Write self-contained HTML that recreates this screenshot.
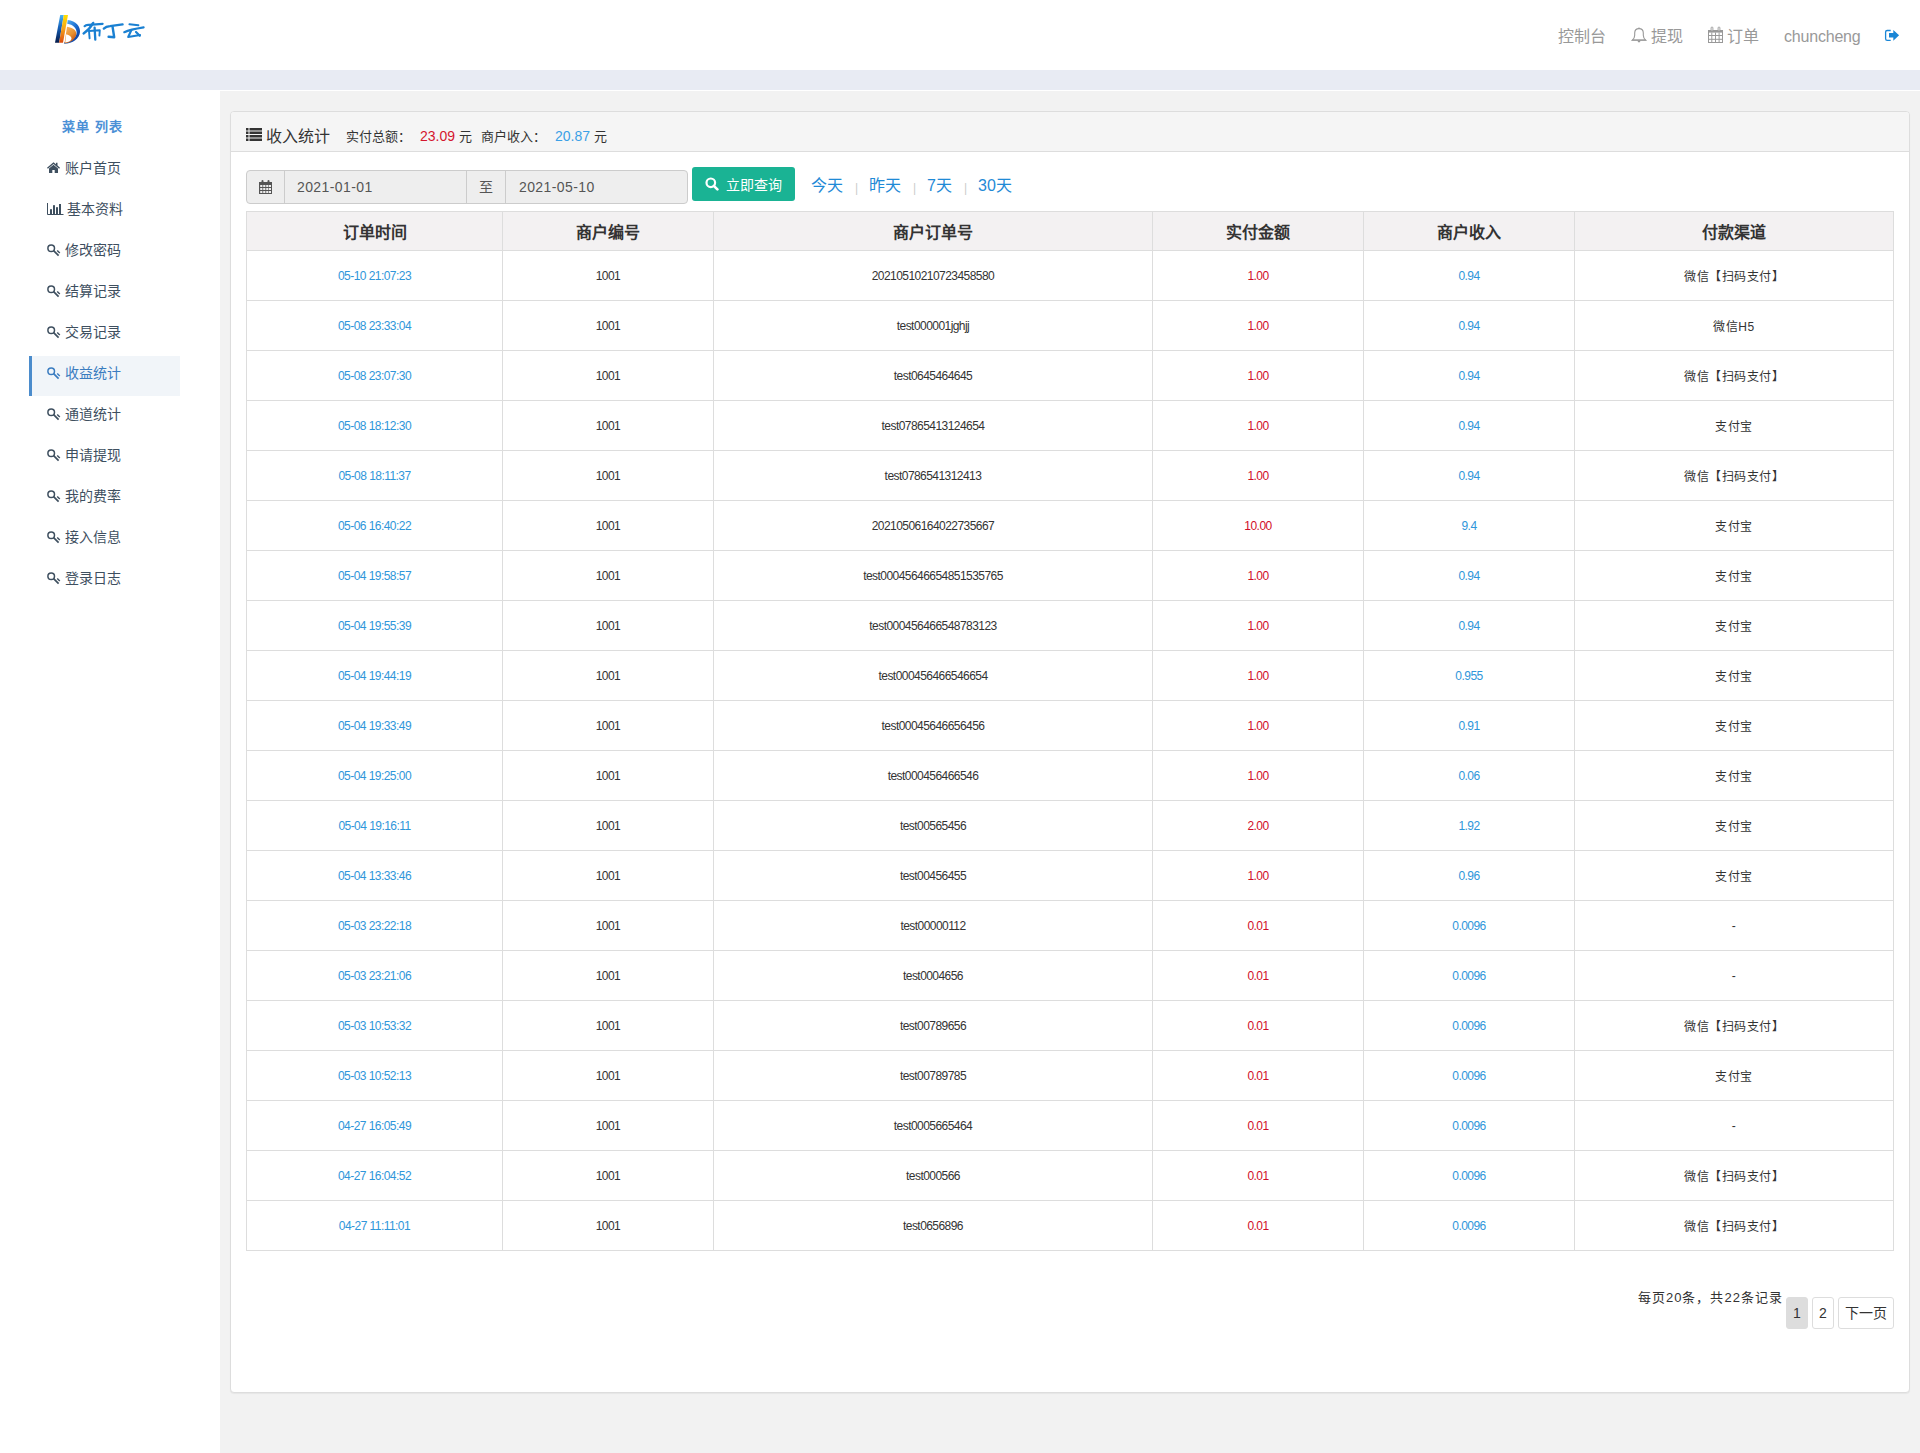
<!DOCTYPE html>
<html lang="zh-CN"><head><meta charset="utf-8"><title>收益统计</title>
<style>
*{box-sizing:border-box;margin:0;padding:0}
html,body{width:1920px;height:1453px;overflow:hidden}
body{position:relative;background:#f2f2f2;font-family:"Liberation Sans",sans-serif;color:#333;font-size:14px}
.abs{position:absolute}
#hdr{left:0;top:0;width:1920px;height:70px;background:#fff}
#band{left:0;top:70px;width:1920px;height:20px;background:#e8ebf3}
#side{left:0;top:90px;width:220px;height:1363px;background:#fff}
#mainline{left:220px;top:90px;width:1700px;height:1px;background:#fff}
.nav{top:27px;font-size:16px;color:#999;line-height:20px;white-space:nowrap}
.menu-title{left:62px;top:118px;font-size:13px;letter-spacing:1.2px;color:#4b90d6;font-weight:bold;line-height:18px;white-space:nowrap}
.mi{left:47px;font-size:14px;color:#3e4f5f;line-height:18px;white-space:nowrap}
.mi svg{position:absolute;left:0;top:3px}
.mi span{position:absolute;left:18px;top:0}
#active{left:29px;top:356px;width:151px;height:40px;background:#f1f5f9;border-left:3px solid #4b8ccc}
#card{left:230px;top:111px;width:1680px;height:1282px;background:#fff;border:1px solid #ddd;border-radius:4px;box-shadow:0 1px 1px rgba(0,0,0,.05)}
#cardhd{left:0;top:0;width:1678px;height:40px;background:#f5f5f5;border-bottom:1px solid #ddd;border-radius:3px 3px 0 0}
.t16{font-size:16px;line-height:20px;white-space:nowrap}
.t13{font-size:13px;line-height:16px;white-space:nowrap}
#ig{left:246px;top:170px;width:442px;height:34px;background:#eee;border:1px solid #ccc;border-radius:4px}
.vdiv{position:absolute;top:0;width:1px;height:32px;background:#ccc}
#btn{left:692px;top:167px;width:103px;height:34px;background:#1ab394;border-radius:3px;color:#fff}
.ql{top:176px;font-size:16px;color:#1f8ad6;line-height:20px;white-space:nowrap}
.sep{top:181px;font-size:12px;color:#ccc;line-height:14px}
table{position:absolute;left:246px;top:211px;border-collapse:separate;border-spacing:0;table-layout:fixed;width:1648px;border-top:1px solid #ddd;border-left:1px solid #ddd}
th,td{border-right:1px solid #ddd;border-bottom:1px solid #ddd;text-align:center;padding:0;white-space:nowrap}
th{height:39px;background:#f3f1f2;font-size:16px;font-weight:bold;color:#333}
td{height:50px;font-size:12px;color:#333;letter-spacing:-0.55px}
td:nth-child(6){letter-spacing:0.5px}
td.b{color:#2f96da}
td.r{color:#d10d28}
.pg{top:1297px;height:32px;border:1px solid #ddd;border-radius:3px;background:#fff;font-size:14px;color:#333;text-align:center;line-height:30px}
</style></head><body>
<div id="hdr" class="abs"></div>
<div id="band" class="abs"></div>
<div id="side" class="abs"></div>
<div id="mainline" class="abs"></div>

<!-- logo -->
<svg class="abs" style="left:50px;top:10px" width="100" height="40" viewBox="50 10 100 40">
  <defs>
    <linearGradient id="g1" x1="0" y1="0" x2="0" y2="1"><stop offset="0" stop-color="#49b4f7"/><stop offset=".45" stop-color="#1560b8"/><stop offset="1" stop-color="#061a48"/></linearGradient>
    <linearGradient id="g2" x1="0" y1="0" x2="0" y2="1"><stop offset="0" stop-color="#ffe000"/><stop offset=".5" stop-color="#f5a21a"/><stop offset="1" stop-color="#dc4a0c"/></linearGradient>
    <linearGradient id="g3" x1="0" y1="0" x2="1" y2="1"><stop offset="0" stop-color="#62c0fa"/><stop offset=".5" stop-color="#1a6cd0"/><stop offset="1" stop-color="#0a2580"/></linearGradient>
    <linearGradient id="g4" x1="0" y1="0" x2="0.6" y2="1"><stop offset="0" stop-color="#fbb45c"/><stop offset=".6" stop-color="#e9902e"/><stop offset="1" stop-color="#c24c10"/></linearGradient>
  </defs>
  <polygon points="60.2,15 63.8,15 59.1,42.8 55,42.8" fill="url(#g1)"/>
  <polygon points="63.8,15 68,15 63,42.8 59.1,42.8" fill="url(#g2)"/>
  <path d="M67.7 20 C76 21 80.5 26.5 80 32 C79.5 38.5 73 43.5 64 43.8 L64.5 42 C71 41.5 76.2 37.5 76.6 33 C77 28.5 73 24.5 67.2 23.8 Z" fill="url(#g3)"/>
  <path d="M67 26.8 C72.8 27.6 76.6 30.5 76.3 34 C75.9 39 70.5 43 64.5 43.4 Z" fill="url(#g4)"/>
  <path d="M66.2 34.2 C69.3 34.8 71.6 36.6 71.5 38.6 C71.3 41 68.6 42.3 65.2 42.6 Z" fill="#fff"/>
  <g fill="none" stroke="#1a80d2" stroke-linecap="round" stroke-linejoin="round">
    <path d="M84.6 26.2 Q86 24.6 89 24.9 L102.6 23.9" stroke-width="2.2"/>
    <path d="M93.2 22.9 Q89.5 29.5 83.6 33.4" stroke-width="2.4"/>
    <path d="M94.6 27.6 L95.3 39.6" stroke-width="2.3"/>
    <path d="M89 31 L89.6 38.4" stroke-width="1.9"/>
    <path d="M89 31 L99.8 30.2 L99.4 35.6" stroke-width="1.9"/>
    <path d="M103.8 28.6 Q106 26.5 110 26.2 L122.6 24.4" stroke-width="2.3"/>
    <path d="M112.6 27 L114.2 37.2 L108.6 36.8" stroke-width="2.4"/>
    <path d="M129.4 24.3 L138.4 25.3" stroke-width="1.9"/>
    <path d="M124.3 32.2 Q130 29.6 143.6 27.4" stroke-width="2.2"/>
    <path d="M131.4 30 L128.2 37 L140 35" stroke-width="2.1"/>
    <path d="M136 32 L139.8 35.8" stroke-width="2.2"/>
  </g>
</svg>

<!-- header nav -->
<div class="abs nav" style="left:1558px">控制台</div>
<svg class="abs" style="left:1631px;top:27px" width="16" height="17" viewBox="0 0 16 17"><path d="M8 1.6C5.6 1.6 3.7 3.2 3.7 6v2.2c0 2.3-1.1 3.8-2.4 4.9h13.4c-1.3-1.1-2.4-2.6-2.4-4.9V6c0-2.8-1.9-4.4-4.3-4.4z" fill="none" stroke="#999" stroke-width="1.1"/><path d="M7.4 0.4h1.2v1.6H7.4z" fill="#999"/><path d="M1 12.6h14v1H1z" fill="#999"/><path d="M6.6 13.6h2.8l-0.4 1.6H7z" fill="#999"/></svg>
<div class="abs nav" style="left:1651px">提现</div>
<svg class="abs" style="left:1707px;top:26px" width="17" height="18" viewBox="0 0 17 18"><rect x="1.5" y="4.5" width="14" height="12" fill="none" stroke="#999" stroke-width="1"/><rect x="1" y="4" width="15" height="2.6" fill="#999"/><g stroke="#999" stroke-width="1" fill="none"><path d="M4.8 6.5v10M8.5 6.5v10M12.1 6.5v10M1.5 9.5h14M1.5 13.3h14"/></g><rect x="4.1" y="1" width="1.8" height="4" rx="0.9" fill="#fff" stroke="#999" stroke-width="0.9"/><rect x="11.1" y="1" width="1.8" height="4" rx="0.9" fill="#fff" stroke="#999" stroke-width="0.9"/></svg>
<div class="abs nav" style="left:1727px">订单</div>
<div class="abs nav" style="left:1784px;letter-spacing:-0.2px">chuncheng</div>
<svg class="abs" style="left:1884px;top:28px" width="16" height="14" viewBox="0 0 16 14"><path d="M6.7 2.5H3.2C2.2 2.5 1.6 3.1 1.6 4.1v6.6c0 1 0.6 1.7 1.6 1.7h3.5" fill="none" stroke="#1a86d6" stroke-width="1.3"/><path d="M5 4.9h4.3V2l5.8 5.3-5.8 5.5V9.6H5z" fill="#1a86d6"/></svg>

<!-- sidebar -->
<div class="abs menu-title">菜单 列表</div>
<div id="active" class="abs"></div>
<div class="abs mi" style="top:159px"><svg width="13" height="12" viewBox="0 0 13 12"><path d="M6.5 0.3L0 5.8l0.9 0.9L6.5 2l5.6 4.7 0.9-0.9-2.5-2.2V0.8H9v1.5z" fill="#3e4f5f"/><path d="M2 6.4v4.5h3.3V7.9h2.4v3H11V6.4L6.5 2.7z" fill="#3e4f5f"/></svg><span>账户首页</span></div>
<div class="abs mi" style="top:200px"><svg width="17" height="14" viewBox="0 0 17 14"><path d="M0.5 0v11.5H16.5" fill="none" stroke="#3e4f5f" stroke-width="1"/><rect x="3" y="6.2" width="2" height="4.8" fill="#3e4f5f"/><rect x="6" y="2.2" width="2" height="8.8" fill="#3e4f5f"/><rect x="9" y="4.2" width="2" height="6.8" fill="#3e4f5f"/><rect x="12" y="1" width="2" height="10" fill="#3e4f5f"/></svg><span style="left:20px">基本资料</span></div>
<div class="abs mi" style="top:241px;color:#3e4f5f"><svg width="15" height="14" viewBox="0 0 15 14"><circle cx="4.2" cy="4.2" r="3.3" fill="none" stroke="#3e4f5f" stroke-width="1.5"/><path d="M6.6 6.6l5 5" stroke="#3e4f5f" stroke-width="1.7" fill="none"/><path d="M10.2 6.4l2.6 2.6" stroke="#3e4f5f" stroke-width="1.4" fill="none"/></svg><span>修改密码</span></div>
<div class="abs mi" style="top:282px;color:#3e4f5f"><svg width="15" height="14" viewBox="0 0 15 14"><circle cx="4.2" cy="4.2" r="3.3" fill="none" stroke="#3e4f5f" stroke-width="1.5"/><path d="M6.6 6.6l5 5" stroke="#3e4f5f" stroke-width="1.7" fill="none"/><path d="M10.2 6.4l2.6 2.6" stroke="#3e4f5f" stroke-width="1.4" fill="none"/></svg><span>结算记录</span></div>
<div class="abs mi" style="top:323px;color:#3e4f5f"><svg width="15" height="14" viewBox="0 0 15 14"><circle cx="4.2" cy="4.2" r="3.3" fill="none" stroke="#3e4f5f" stroke-width="1.5"/><path d="M6.6 6.6l5 5" stroke="#3e4f5f" stroke-width="1.7" fill="none"/><path d="M10.2 6.4l2.6 2.6" stroke="#3e4f5f" stroke-width="1.4" fill="none"/></svg><span>交易记录</span></div>
<div class="abs mi" style="top:364px;color:#3a7cc0"><svg width="15" height="14" viewBox="0 0 15 14"><circle cx="4.2" cy="4.2" r="3.3" fill="none" stroke="#3a7cc0" stroke-width="1.5"/><path d="M6.6 6.6l5 5" stroke="#3a7cc0" stroke-width="1.7" fill="none"/><path d="M10.2 6.4l2.6 2.6" stroke="#3a7cc0" stroke-width="1.4" fill="none"/></svg><span>收益统计</span></div>
<div class="abs mi" style="top:405px;color:#3e4f5f"><svg width="15" height="14" viewBox="0 0 15 14"><circle cx="4.2" cy="4.2" r="3.3" fill="none" stroke="#3e4f5f" stroke-width="1.5"/><path d="M6.6 6.6l5 5" stroke="#3e4f5f" stroke-width="1.7" fill="none"/><path d="M10.2 6.4l2.6 2.6" stroke="#3e4f5f" stroke-width="1.4" fill="none"/></svg><span>通道统计</span></div>
<div class="abs mi" style="top:446px;color:#3e4f5f"><svg width="15" height="14" viewBox="0 0 15 14"><circle cx="4.2" cy="4.2" r="3.3" fill="none" stroke="#3e4f5f" stroke-width="1.5"/><path d="M6.6 6.6l5 5" stroke="#3e4f5f" stroke-width="1.7" fill="none"/><path d="M10.2 6.4l2.6 2.6" stroke="#3e4f5f" stroke-width="1.4" fill="none"/></svg><span>申请提现</span></div>
<div class="abs mi" style="top:487px;color:#3e4f5f"><svg width="15" height="14" viewBox="0 0 15 14"><circle cx="4.2" cy="4.2" r="3.3" fill="none" stroke="#3e4f5f" stroke-width="1.5"/><path d="M6.6 6.6l5 5" stroke="#3e4f5f" stroke-width="1.7" fill="none"/><path d="M10.2 6.4l2.6 2.6" stroke="#3e4f5f" stroke-width="1.4" fill="none"/></svg><span>我的费率</span></div>
<div class="abs mi" style="top:528px;color:#3e4f5f"><svg width="15" height="14" viewBox="0 0 15 14"><circle cx="4.2" cy="4.2" r="3.3" fill="none" stroke="#3e4f5f" stroke-width="1.5"/><path d="M6.6 6.6l5 5" stroke="#3e4f5f" stroke-width="1.7" fill="none"/><path d="M10.2 6.4l2.6 2.6" stroke="#3e4f5f" stroke-width="1.4" fill="none"/></svg><span>接入信息</span></div>
<div class="abs mi" style="top:569px;color:#3e4f5f"><svg width="15" height="14" viewBox="0 0 15 14"><circle cx="4.2" cy="4.2" r="3.3" fill="none" stroke="#3e4f5f" stroke-width="1.5"/><path d="M6.6 6.6l5 5" stroke="#3e4f5f" stroke-width="1.7" fill="none"/><path d="M10.2 6.4l2.6 2.6" stroke="#3e4f5f" stroke-width="1.4" fill="none"/></svg><span>登录日志</span></div>

<!-- card -->
<div id="card" class="abs">
  <div id="cardhd" class="abs"></div>
</div>
<svg class="abs" style="left:246px;top:128px" width="16" height="13" viewBox="0 0 16 13"><g fill="#333"><rect x="0" y="0" width="2.5" height="2.5"/><rect x="3.5" y="0" width="12.5" height="2.5"/><rect x="0" y="3.5" width="2.5" height="2.5"/><rect x="3.5" y="3.5" width="12.5" height="2.5"/><rect x="0" y="7" width="2.5" height="2.5"/><rect x="3.5" y="7" width="12.5" height="2.5"/><rect x="0" y="10.5" width="2.5" height="2.5"/><rect x="3.5" y="10.5" width="12.5" height="2.5"/></g></svg>
<div class="abs t16" style="left:266px;top:127px">收入统计</div>
<div class="abs t13" style="left:346px;top:129px">实付总额：</div>
<div class="abs t13" style="left:420px;top:128px;color:#d4152e;font-size:14px">23.09</div>
<div class="abs t13" style="left:459px;top:129px">元</div>
<div class="abs t13" style="left:481px;top:129px">商户收入：</div>
<div class="abs t13" style="left:555px;top:128px;color:#3ba0e6;font-size:14px">20.87</div>
<div class="abs t13" style="left:594px;top:129px">元</div>

<!-- search -->
<div id="ig" class="abs">
  <div class="vdiv" style="left:37px"></div>
  <div class="vdiv" style="left:219px"></div>
  <div class="vdiv" style="left:258px"></div>
</div>
<svg class="abs" style="left:259px;top:180px" width="14" height="14" viewBox="0 0 14 14"><rect x="0" y="2" width="13" height="12" fill="#555"/><g fill="#eee"><rect x="1.2" y="5" width="2.2" height="2"/><rect x="4.2" y="5" width="2.2" height="2"/><rect x="7.2" y="5" width="2.2" height="2"/><rect x="10" y="5" width="2" height="2"/><rect x="1.2" y="8" width="2.2" height="2"/><rect x="4.2" y="8" width="2.2" height="2"/><rect x="7.2" y="8" width="2.2" height="2"/><rect x="10" y="8" width="2" height="2"/><rect x="1.2" y="11" width="2.2" height="2"/><rect x="4.2" y="11" width="2.2" height="2"/><rect x="7.2" y="11" width="2.2" height="2"/><rect x="10" y="11" width="2" height="2"/></g><rect x="2.5" y="0" width="2" height="4" rx="1" fill="#555"/><rect x="8.5" y="0" width="2" height="4" rx="1" fill="#555"/></svg>
<div class="abs" style="left:297px;top:178px;font-size:14px;color:#555;line-height:18px;letter-spacing:0.4px">2021-01-01</div>
<div class="abs" style="left:479px;top:178px;font-size:14px;color:#555;line-height:18px">至</div>
<div class="abs" style="left:519px;top:178px;font-size:14px;color:#555;line-height:18px;letter-spacing:0.4px">2021-05-10</div>
<div id="btn" class="abs">
  <svg class="abs" style="left:13px;top:10px" width="14" height="14" viewBox="0 0 14 14"><circle cx="5.8" cy="5.8" r="4.3" fill="none" stroke="#fff" stroke-width="2.2"/><path d="M8.8 8.8l3.6 3.6" stroke="#fff" stroke-width="2.6" stroke-linecap="round"/></svg>
  <div class="abs" style="left:34px;top:9px;font-size:14px;line-height:18px;white-space:nowrap">立即查询</div>
</div>
<div class="abs ql" style="left:811px">今天</div>
<div class="abs sep" style="left:855px">|</div>
<div class="abs ql" style="left:869px">昨天</div>
<div class="abs sep" style="left:913px">|</div>
<div class="abs ql" style="left:927px">7天</div>
<div class="abs sep" style="left:964px">|</div>
<div class="abs ql" style="left:978px">30天</div>

<table>
<colgroup><col style="width:256px"><col style="width:211px"><col style="width:439px"><col style="width:211px"><col style="width:211px"><col style="width:319px"></colgroup>
<thead><tr><th>订单时间</th><th>商户编号</th><th>商户订单号</th><th>实付金额</th><th>商户收入</th><th>付款渠道</th></tr></thead>
<tbody>
<tr><td class="b">05-10 21:07:23</td><td>1001</td><td>20210510210723458580</td><td class="r">1.00</td><td class="b">0.94</td><td>微信【扫码支付】</td></tr>
<tr><td class="b">05-08 23:33:04</td><td>1001</td><td>test000001jghjj</td><td class="r">1.00</td><td class="b">0.94</td><td>微信H5</td></tr>
<tr><td class="b">05-08 23:07:30</td><td>1001</td><td>test0645464645</td><td class="r">1.00</td><td class="b">0.94</td><td>微信【扫码支付】</td></tr>
<tr><td class="b">05-08 18:12:30</td><td>1001</td><td>test07865413124654</td><td class="r">1.00</td><td class="b">0.94</td><td>支付宝</td></tr>
<tr><td class="b">05-08 18:11:37</td><td>1001</td><td>test0786541312413</td><td class="r">1.00</td><td class="b">0.94</td><td>微信【扫码支付】</td></tr>
<tr><td class="b">05-06 16:40:22</td><td>1001</td><td>20210506164022735667</td><td class="r">10.00</td><td class="b">9.4</td><td>支付宝</td></tr>
<tr><td class="b">05-04 19:58:57</td><td>1001</td><td>test00045646654851535765</td><td class="r">1.00</td><td class="b">0.94</td><td>支付宝</td></tr>
<tr><td class="b">05-04 19:55:39</td><td>1001</td><td>test000456466548783123</td><td class="r">1.00</td><td class="b">0.94</td><td>支付宝</td></tr>
<tr><td class="b">05-04 19:44:19</td><td>1001</td><td>test000456466546654</td><td class="r">1.00</td><td class="b">0.955</td><td>支付宝</td></tr>
<tr><td class="b">05-04 19:33:49</td><td>1001</td><td>test00045646656456</td><td class="r">1.00</td><td class="b">0.91</td><td>支付宝</td></tr>
<tr><td class="b">05-04 19:25:00</td><td>1001</td><td>test000456466546</td><td class="r">1.00</td><td class="b">0.06</td><td>支付宝</td></tr>
<tr><td class="b">05-04 19:16:11</td><td>1001</td><td>test00565456</td><td class="r">2.00</td><td class="b">1.92</td><td>支付宝</td></tr>
<tr><td class="b">05-04 13:33:46</td><td>1001</td><td>test00456455</td><td class="r">1.00</td><td class="b">0.96</td><td>支付宝</td></tr>
<tr><td class="b">05-03 23:22:18</td><td>1001</td><td>test00000112</td><td class="r">0.01</td><td class="b">0.0096</td><td>-</td></tr>
<tr><td class="b">05-03 23:21:06</td><td>1001</td><td>test0004656</td><td class="r">0.01</td><td class="b">0.0096</td><td>-</td></tr>
<tr><td class="b">05-03 10:53:32</td><td>1001</td><td>test00789656</td><td class="r">0.01</td><td class="b">0.0096</td><td>微信【扫码支付】</td></tr>
<tr><td class="b">05-03 10:52:13</td><td>1001</td><td>test00789785</td><td class="r">0.01</td><td class="b">0.0096</td><td>支付宝</td></tr>
<tr><td class="b">04-27 16:05:49</td><td>1001</td><td>test0005665464</td><td class="r">0.01</td><td class="b">0.0096</td><td>-</td></tr>
<tr><td class="b">04-27 16:04:52</td><td>1001</td><td>test000566</td><td class="r">0.01</td><td class="b">0.0096</td><td>微信【扫码支付】</td></tr>
<tr><td class="b">04-27 11:11:01</td><td>1001</td><td>test0656896</td><td class="r">0.01</td><td class="b">0.0096</td><td>微信【扫码支付】</td></tr>
</tbody>
</table>

<!-- pagination -->
<div class="abs" style="left:1638px;top:1290px;letter-spacing:1px;font-size:13px;line-height:16px;color:#333;white-space:nowrap">每页20条，共22条记录</div>
<div class="abs pg" style="left:1786px;width:22px;background:#ddd;border-color:#ddd">1</div>
<div class="abs pg" style="left:1812px;width:22px">2</div>
<div class="abs pg" style="left:1838px;width:56px">下一页</div>
</body></html>
